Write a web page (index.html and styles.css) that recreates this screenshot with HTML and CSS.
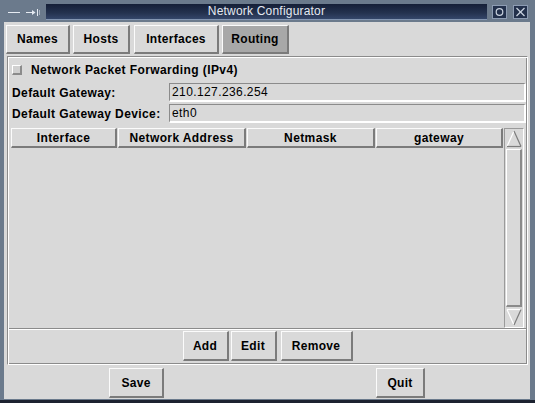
FILE: index.html
```html
<!DOCTYPE html>
<html>
<head>
<meta charset="utf-8">
<link rel="stylesheet" href="styles.css">
</head>
<body>
<div class="window">
  <div class="titlebar">
    <div class="tb-icons">
      <svg width="46" height="22" viewBox="0 0 46 22">
        <line x1="8" y1="12.5" x2="20" y2="12.5" stroke="#e6ebf2" stroke-width="1"/>
        <line x1="26" y1="12.5" x2="34" y2="12.5" stroke="#e6ebf2" stroke-width="1"/>
        <polygon points="32,10 35.5,12.5 32,15" fill="#e6ebf2"/>
        <line x1="37.5" y1="9" x2="37.5" y2="16" stroke="#e6ebf2" stroke-width="1"/>
        <line x1="39.5" y1="10" x2="39.5" y2="15" stroke="#aab4c2" stroke-width="1"/>
      </svg>
    </div>
    <div class="tb-title">Network Configurator</div>
    <div class="tb-btns">
      <span class="tb-btn">
        <svg width="15" height="14" viewBox="0 0 15 14">
          <rect x="0.5" y="0.5" width="14" height="13" fill="#22304b" stroke="#8d9cb3"/>
          <circle cx="7.5" cy="7" r="3.3" fill="none" stroke="#c9d2df" stroke-width="1.2"/>
        </svg>
      </span>
      <span class="tb-btn">
        <svg width="15" height="14" viewBox="0 0 15 14">
          <rect x="0.5" y="0.5" width="14" height="13" fill="#22304b" stroke="#8d9cb3"/>
          <line x1="3.5" y1="3" x2="11.5" y2="11" stroke="#c9d2df" stroke-width="1.3"/>
          <line x1="11.5" y1="3" x2="3.5" y2="11" stroke="#c9d2df" stroke-width="1.3"/>
        </svg>
      </span>
    </div>
  </div>

  <div class="client">
    <div class="tabs">
      <div class="btn tab-names">Names</div>
      <div class="btn tab-hosts">Hosts</div>
      <div class="btn tab-ifaces">Interfaces</div>
      <div class="btn tab-routing active">Routing</div>
    </div>

    <div class="panel">
      <div class="check-row">
        <span class="check"></span>
        <span class="label">Network Packet Forwarding (IPv4)</span>
      </div>
      <div class="field-row">
        <span class="label field-label">Default Gateway:</span>
        <div class="entry">210.127.236.254</div>
      </div>
      <div class="field-row">
        <span class="label field-label">Default Gateway Device:</span>
        <div class="entry">eth0</div>
      </div>

      <div class="list">
        <div class="list-main">
          <div class="header">
            <div class="hcell c-iface">Interface</div>
            <div class="hcell c-addr">Network Address</div>
            <div class="hcell c-mask">Netmask</div>
            <div class="hcell c-gw">gateway</div>
          </div>
        </div>
        <div class="scrollbar">
          <div class="arrow">
            <svg width="16" height="18" viewBox="0 0 16 18">
              <polygon points="8,1 15,17 1,17" fill="#d9d9d9"/>
              <line x1="1" y1="16.5" x2="8" y2="1" stroke="#ffffff" stroke-width="1.2"/>
              <line x1="8" y1="1" x2="15" y2="16.5" stroke="#7c7c7c" stroke-width="1.2"/>
              <line x1="1" y1="16.5" x2="15" y2="16.5" stroke="#7c7c7c" stroke-width="1.2"/>
            </svg>
          </div>
          <div class="slider"></div>
          <div class="arrow">
            <svg width="16" height="18" viewBox="0 0 16 18">
              <polygon points="1,1 15,1 8,17" fill="#d9d9d9"/>
              <line x1="1" y1="1.5" x2="15" y2="1.5" stroke="#ffffff" stroke-width="1.2"/>
              <line x1="1" y1="1.5" x2="8" y2="17" stroke="#ffffff" stroke-width="1.2"/>
              <line x1="15" y1="1.5" x2="8" y2="17" stroke="#7c7c7c" stroke-width="1.2"/>
            </svg>
          </div>
        </div>
      </div>

      <div class="actions">
        <div class="btn act-add">Add</div>
        <div class="btn act-edit">Edit</div>
        <div class="btn act-remove">Remove</div>
      </div>
    </div>

    <div class="footer">
      <div class="fcell"><div class="btn f-save">Save</div></div>
      <div class="fcell"><div class="btn f-quit">Quit</div></div>
    </div>
  </div>
  <div class="bottom-edge"></div>
</div>
</body>
</html>
```

FILE: styles.css
```css
* { box-sizing: border-box; }
html, body { margin: 0; padding: 0; }
body {
  width: 535px;
  height: 403px;
  overflow: hidden;
  background: #6b7a8c;
  font-family: "Liberation Sans", Arial, sans-serif;
  font-size: 12px;
  color: #000;
}
.window {
  display: flex;
  flex-direction: column;
  height: 403px;
}
.titlebar {
  height: 22px;
  display: flex;
  align-items: flex-start;
  flex: none;
}
.tb-icons { width: 46px; height: 22px; }
.tb-icons svg { display: block; }
.tb-title {
  flex: 1;
  margin-top: 4px;
  height: 16px;
  background: linear-gradient(#151f37, #24324f 60%, #34466a);
  border-bottom: 1px solid #8496b2;
  color: #e4e9f1;
  text-align: center;
  font-size: 12px;
  letter-spacing: 0.2px;
  line-height: 15px;
}
.tb-btns {
  width: 48px;
  display: flex;
  gap: 6px;
  padding: 5px 0 0 5px;
}
.tb-btn svg { display: block; }

.client {
  flex: none;
  height: 377px;
  margin: 0 5px 0 4px;
  background: #d9d9d9;
  display: flex;
  flex-direction: column;
}
.bottom-edge {
  flex: none;
  margin-top: 1px;
  height: 3px;
  background: #1c2230;
}

.btn {
  display: flex;
  align-items: center;
  justify-content: center;
  font-weight: bold;
  letter-spacing: 0.3px;
  background: #d9d9d9;
  border-style: solid;
  border-width: 1px 2px 2px 1px;
  border-color: #fbfbfb #7b7b7b #7b7b7b #fbfbfb;
  white-space: nowrap;
}

.tabs {
  height: 34px;
  flex: none;
  display: flex;
  align-items: flex-start;
  padding: 3px 0 0 2px;
}
.tabs .btn { height: 29px; }
.tab-names { width: 64px; }
.tab-hosts { width: 57px; margin-left: 3px; }
.tab-ifaces { width: 85px; margin-left: 4px; }
.tab-routing { width: 67px; margin-left: 3px; }
.btn.active { background: #a8a8a8; }

.panel {
  flex: none;
  height: 309px;
  margin: 0 2px 0 3px;
  border: 1px solid;
  border-color: #8b8b8b #ffffff #ffffff #8b8b8b;
  box-shadow: inset 1px 1px 0 #ffffff, inset -1px -1px 0 #8b8b8b;
  padding: 1px;
  display: flex;
  flex-direction: column;
}
.label { font-weight: bold; white-space: nowrap; letter-spacing: 0.4px; }

.check-row {
  height: 23px;
  flex: none;
  display: flex;
  align-items: center;
  padding: 1px 0 0 3px;
}
.check {
  width: 10px;
  height: 10px;
  background: #d0d0d0;
  border-style: solid;
  border-width: 1px 2px 2px 1px;
  border-color: #ffffff #8b8b8b #8b8b8b #ffffff;
  margin-right: 9px;
}

.field-row {
  height: 19px;
  flex: none;
  margin-top: 2px;
  display: flex;
  align-items: center;
}
.field-label {
  width: 160px;
  padding-left: 3px;
}
.entry {
  flex: 1;
  height: 19px;
  border-style: solid;
  border-width: 1px 2px 2px 1px;
  border-color: #8b8b8b #ffffff #ffffff #8b8b8b;
  padding-left: 2px;
  line-height: 16px;
  letter-spacing: 0.4px;
}

.list {
  flex: none;
  height: 202px;
  margin-top: 4px;
  display: flex;
  border-bottom: 1px solid #8b8b8b;
}
.list-main {
  flex: 1;
  padding: 1px 0 0 2px;
}
.header {
  display: flex;
  height: 20px;
}
.hcell {
  height: 20px;
  font-weight: bold;
  letter-spacing: 0.4px;
  display: flex;
  align-items: center;
  justify-content: center;
  border-style: solid;
  border-width: 1px 2px 2px 1px;
  border-color: #fbfbfb #7b7b7b #7b7b7b #fbfbfb;
  margin-right: 1px;
}
.c-iface { width: 106px; }
.c-addr { width: 128px; }
.c-mask { width: 128px; }
.c-gw { width: 127px; }

.scrollbar {
  width: 20px;
  height: 200px;
  margin: 1px 2px 0 0;
  border: 1px solid;
  border-color: #9a9a9a #ffffff #ffffff #9a9a9a;
  padding: 1px;
  display: flex;
  flex-direction: column;
}
.arrow { height: 18px; flex: none; }
.arrow svg { display: block; }
.slider {
  flex: 1;
  margin: 1px 0;
  border-style: solid;
  border-width: 1px 2px 2px 1px;
  border-color: #ffffff #8b8b8b #8b8b8b #ffffff;
}

.actions {
  flex: 1;
  border-top: 1px solid #ffffff;
  display: flex;
  justify-content: center;
  align-items: flex-start;
  padding-top: 1px;
}
.actions .btn { height: 30px; }
.act-add { width: 46px; }
.act-edit { width: 46px; margin-left: 2px; }
.act-remove { width: 72px; margin-left: 4px; }

.footer {
  flex: 1;
  display: grid;
  grid-template-columns: 1fr 1fr;
}
.fcell {
  display: flex;
  justify-content: center;
  padding-top: 3px;
}
.footer .btn { height: 30px; }
.f-save { width: 55px; margin-left: 2px; }
.f-quit { width: 49px; margin-left: 4px; }
```
